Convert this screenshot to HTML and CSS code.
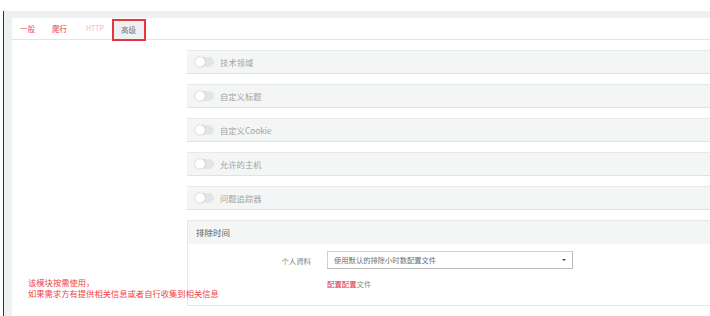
FILE: index.html
```html
<!DOCTYPE html>
<html lang="zh">
<head>
<meta charset="utf-8">
<link rel="stylesheet" href="styles.css">
</head>
<body>
<div class="frame">
  <div class="page">
    <div class="tabs">
      <span class="tab tab-general">一般</span>
      <span class="tab tab-crawl">爬行</span>
      <span class="tab tab-http">HTTP</span>
      <span class="tab tab-active">高级</span>
    </div>
    <div class="content">
      <div class="panel"><span class="toggle"><span class="knob"></span></span><span class="label">技术领域</span></div>
      <div class="panel"><span class="toggle"><span class="knob"></span></span><span class="label">自定义标题</span></div>
      <div class="panel"><span class="toggle"><span class="knob"></span></span><span class="label">自定义Cookie</span></div>
      <div class="panel"><span class="toggle"><span class="knob"></span></span><span class="label">允许的主机</span></div>
      <div class="panel"><span class="toggle"><span class="knob"></span></span><span class="label">问题追踪器</span></div>
      <div class="section">
        <div class="section-head">排除时间</div>
        <div class="section-body">
          <div class="form-row">
            <span class="form-label">个人資料</span>
            <div class="select"><span>使用默认的排除小时数配置文件</span><span class="caret"></span></div>
          </div>
          <div class="form-link"><span class="link-red">配置配置</span><span class="link-grey">文件</span></div>
        </div>
      </div>
    </div>
    <div class="note">该模块按需使用，<br>如果需求方有提供相关信息或者自行收集到相关信息</div>
  </div>
</div>
</body>
</html>
```

FILE: styles.css
```css
html, body {
  margin: 0;
  padding: 0;
  background: #fff;
  overflow: hidden;
  height: 316px;
}
body {
  font-family: "Noto Sans CJK SC", "Noto Sans", sans-serif;
  padding-top: 11px;
}
.frame {
  margin-left: 3px;
  border-left: 1px solid #333;
  background: #eef1f2;
  padding: 7px 0 0 8px;
  height: 298px;
}
.page {
  position: relative;
  background: #fff;
  height: 298px;
  overflow: hidden;
}
.tabs {
  display: flex;
  height: 21px;
  border-bottom: 1px solid #e3e5e5;
  font-size: 7.5px;
  line-height: 21px;
}
.tab {
  padding: 0 8px;
}
.tab-general { color: #ea5870; }
.tab-crawl { color: #e63242; margin-left: 1px; }
.tab-http { color: #f4b0c0; margin-left: 3px; font-size: 7px; }
.tab-active {
  color: #7a7a7a;
  background: #eef1f2;
  border: 2px solid #e8343c;
  padding: 0 8px 0 7px;
  height: 18px;
  line-height: 18px;
  margin-top: 1px;
}
.content {
  margin: 10px -20px 0 175px;
}
.panel {
  display: flex;
  align-items: center;
  height: 22px;
  background: #f4f6f6;
  border-top: 1px solid #e6e9e9;
  border-bottom: 1px solid #e0e3e3;
  margin-bottom: 10px;
  padding-left: 8px;
}
.toggle {
  position: relative;
  width: 19px;
  height: 10px;
  border-radius: 5px;
  background: #e4e5e5;
  margin-right: 6px;
}
.knob {
  position: absolute;
  left: 0;
  top: 0;
  width: 10px;
  height: 10px;
  border-radius: 50%;
  background: #fff;
  box-shadow: 0 0 1.5px rgba(0,0,0,0.3);
}
.label {
  font-size: 8.3px;
  color: #a3a3a3;
}
.section {
  border-left: 1px solid #e6e8e8;
}
.section-head {
  height: 23px;
  line-height: 23px;
  background: #f4f6f6;
  border-top: 1px solid #e6e9e9;
  padding-left: 8px;
  font-size: 8.5px;
  color: #5e5e5e;
}
.section-body {
  border-bottom: 1px solid #e3e5e5;
  padding: 7px 0 0;
  height: 54px;
}
.form-row {
  display: flex;
  align-items: center;
  height: 18px;
}
.form-label {
  width: 123px;
  text-align: right;
  font-size: 7.4px;
  color: #808080;
  margin-right: 16px;
}
.select {
  position: relative;
  box-sizing: border-box;
  width: 246px;
  height: 18px;
  border: 1px solid #d0d0d0;
  border-right-color: #b8b8b8;
  border-bottom-color: #b8b8b8;
  font-size: 7.3px;
  color: #707070;
  line-height: 16px;
  padding-left: 6px;
}
.caret {
  position: absolute;
  right: 6px;
  top: 7px;
  width: 0;
  height: 0;
  border-left: 2.5px solid transparent;
  border-right: 2.5px solid transparent;
  border-top: 2.5px solid #444;
}
.form-link {
  margin: 9px 0 0 139px;
  font-size: 7.4px;
}
.link-red { color: #dc3040; }
.link-grey { color: #8a8a8a; }
.note {
  position: absolute;
  left: 16px;
  top: 259px;
  font-size: 8.3px;
  line-height: 11px;
  color: #f23f4a;
}
```
